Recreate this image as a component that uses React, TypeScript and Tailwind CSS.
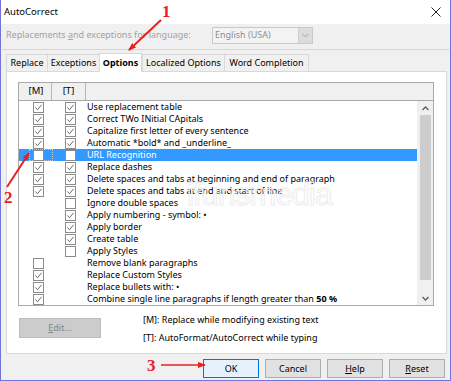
import React from 'react';

type Row = { m: boolean | null; t: boolean | null; label: React.ReactNode; active?: boolean };

const rows: Row[] = [
  { m: true, t: true, label: 'Use replacement table' },
  { m: true, t: true, label: 'Correct TWo INitial CApitals' },
  { m: true, t: true, label: 'Capitalize first letter of every sentence' },
  { m: true, t: true, label: 'Automatic *bold* and _underline_' },
  { m: false, t: false, label: 'URL Recognition', active: true },
  { m: true, t: true, label: 'Replace dashes' },
  { m: true, t: true, label: 'Delete spaces and tabs at beginning and end of paragraph' },
  { m: true, t: true, label: 'Delete spaces and tabs at end and start of line' },
  { m: null, t: false, label: 'Ignore double spaces' },
  { m: null, t: true, label: 'Apply numbering - symbol: •' },
  { m: null, t: true, label: 'Apply border' },
  { m: null, t: true, label: 'Create table' },
  { m: null, t: false, label: 'Apply Styles' },
  { m: false, t: null, label: 'Remove blank paragraphs' },
  { m: true, t: null, label: 'Replace Custom Styles' },
  { m: true, t: null, label: 'Replace bullets with: •' },
  {
    m: true,
    t: null,
    label: (
      <>
        Combine single line paragraphs if length greater than <b className="font-bold">50 %</b>
      </>
    ),
  },
];

function Check({ on }: { on: boolean | null }) {
  if (on === null) return <span className="w-[11px] h-[11px] shrink-0" />;
  return (
    <span className="w-[11px] h-[11px] shrink-0 border border-[#8c8c8c] bg-white flex items-center justify-center">
      {on && (
        <svg width="9" height="9" viewBox="0 0 9 9">
          <polyline points="1.5,4.5 3.5,6.8 7.5,1.8" fill="none" stroke="#6a6a6a" strokeWidth="1" />
        </svg>
      )}
    </span>
  );
}

const tabs = ['Replace', 'Exceptions', 'Options', 'Localized Options', 'Word Completion'];
const tabW = [41, 52, 43, 82, 85];

export default function App() {
  return (
    <div
      className="relative w-[451px] h-[381px] bg-[#f0f0f0] border-x border-b border-[#7373d9] flex flex-col text-[9px] text-black overflow-hidden"
      style={{ fontFamily: '"Noto Sans", "Open Sans", sans-serif' }}
    >
      {/* title bar */}
      <div className="h-[24px] bg-white flex items-center justify-between pl-[3px] pr-[9px] shrink-0">
        <span className="text-[9.5px]">AutoCorrect</span>
        <svg width="10" height="10" viewBox="0 0 10 10">
          <path d="M0.5 0.5 L9.5 9.5 M9.5 0.5 L0.5 9.5" stroke="#222" strokeWidth="1" />
        </svg>
      </div>

      {/* language row */}
      <div className="h-[22px] flex items-center pl-[5px] shrink-0">
        <span className="text-[#a3a3a3] w-[206px]">
          Replacements <span className="underline">a</span>nd exceptions for language:
        </span>
        <div className="w-[101px] h-[17px] border border-[#c9c9c9] bg-[#f3f3f3] flex items-center">
          <span className="flex-1 pl-[2px] text-[#8e8e8e]">English (USA)</span>
          <span className="w-[14px] h-[15px] bg-[#dcdcdc] border-l border-[#cfcfcf] flex items-center justify-center">
            <svg width="7" height="5" viewBox="0 0 7 5">
              <polyline points="0.5,1 3.5,4 6.5,1" fill="none" stroke="#a0a0a0" strokeWidth="1" />
            </svg>
          </span>
        </div>
      </div>

      <div className="h-[4px] border-b border-[#d6d6d6] mx-[1px] shrink-0" />

      {/* tabs */}
      <div className="h-[21px] flex items-end pl-[5px] shrink-0">
        {tabs.map((t, i) => {
          const sel = t === 'Options';
          return (
            <div
              key={t}
              style={{ width: tabW[i] }}
              className={
                sel
                  ? 'h-[19px] bg-white border-x border-t border-[#d9d9d9] flex items-center justify-center font-bold -mb-px relative z-10'
                  : 'h-[17px] bg-[#f0f0f0] border-t border-l last:border-r border-[#d9d9d9] flex items-center justify-center'
              }
            >
              {t}
            </div>
          );
        })}
      </div>

      {/* panel */}
      <div className="mx-[5px] w-[441px] h-[283px] bg-white border border-[#d9d9d9] shrink-0 flex flex-col pl-[11px] pt-[10px]">
        {/* list */}
        <div className="w-[416px] h-[224px] border border-[#aaaaaa] flex flex-col">
          <div className="h-[18px] bg-[#f0f0f0] border-b border-[#a8a8a8] flex shrink-0">
            <div className="w-[33px] border-r border-[#b5b5b5] flex items-center justify-center pl-[2px] text-[9.5px]">[M]</div>
            <div className="w-[34px] border-r border-[#b5b5b5] flex items-center justify-center text-[9.5px]">[T]</div>
            <div className="flex-1" />
          </div>
          <div className="flex flex-1">
            <div className="flex-1 flex flex-col">
              {rows.map((r, i) => (
                <div
                  key={i}
                  className={
                    'h-[12px] flex items-center ' + (r.active ? 'bg-[#3399ff] text-white' : '')
                  }
                >
                  <div
                    className={
                      'w-[24px] h-[12px] ml-[10px] pl-[3px] flex items-center shrink-0 ' +
                      (r.active ? 'border border-dotted border-[#c0c8d4]' : 'border border-transparent')
                    }
                  >
                    <Check on={r.m} />
                  </div>
                  <div className="w-[12px] shrink-0" />
                  <Check on={r.t} />
                  <span className="ml-[11px] whitespace-nowrap leading-[12px]">{r.label}</span>
                </div>
              ))}
            </div>
            {/* scrollbar */}
            <div className="w-[16px] bg-[#f0f0f0] flex flex-col items-center">
              <div className="h-[14px] flex items-center justify-center">
                <svg width="7" height="5" viewBox="0 0 7 5">
                  <polyline points="0.5,4 3.5,1 6.5,4" fill="none" stroke="#606060" strokeWidth="1.4" />
                </svg>
              </div>
              <div className="w-[11px] h-[165px] bg-[#cdcdcd]" />
              <div className="flex-1" />
              <div className="h-[14px] flex items-center justify-center">
                <svg width="7" height="5" viewBox="0 0 7 5">
                  <polyline points="0.5,1 3.5,4 6.5,1" fill="none" stroke="#606060" strokeWidth="1.4" />
                </svg>
              </div>
            </div>
          </div>
        </div>

        {/* below list */}
        <div className="flex mt-[8px]">
          <div className="w-[82px] h-[20px] mt-[4px] ml-[1px] bg-[#cccccc] border border-[#bfbfbf] flex items-center justify-center text-[#848484]">
            <span>
              <span className="underline">E</span>dit...
            </span>
          </div>
          <div className="ml-[42px] flex flex-col gap-[6px] leading-[12px]">
            <span>[M]: Replace while modifying existing text</span>
            <span>[T]: AutoFormat/AutoCorrect while typing</span>
          </div>
        </div>
      </div>

      {/* buttons */}
      <div className="flex justify-end gap-[6px] pr-[5px] mt-[5px]">
        <div className="w-[56px] h-[19px] bg-[#e5f1fb] border border-[#0078d7] flex items-center justify-center">OK</div>
        <div className="w-[56px] h-[19px] bg-[#e1e1e1] border border-[#adadad] flex items-center justify-center">Cancel</div>
        <div className="w-[56px] h-[19px] bg-[#e1e1e1] border border-[#adadad] flex items-center justify-center">
          <span>
            <span className="underline">H</span>elp
          </span>
        </div>
        <div className="w-[56px] h-[19px] bg-[#e1e1e1] border border-[#adadad] flex items-center justify-center">
          <span>
            <span className="underline">R</span>eset
          </span>
        </div>
      </div>

      {/* watermark */}
      <div
        className="absolute left-[186px] top-[170px] text-[32px] tracking-[-1px] text-transparent pointer-events-none select-none"
        style={{ WebkitTextStroke: '1px #ededed', fontFamily: '"Liberation Sans Narrow", "Liberation Sans", sans-serif' }}
      >
        ifunsmedia
      </div>

      {/* annotations */}
      <svg className="absolute inset-0 pointer-events-none" width="451" height="381" viewBox="0 0 451 381">
        <defs>
          <marker id="ah" markerWidth="8" markerHeight="6" refX="7" refY="3" orient="auto" markerUnits="userSpaceOnUse">
            <polygon points="0,0 8,3 0,6" fill="#e8201f" />
          </marker>
        </defs>
        <line x1="160" y1="20" x2="128" y2="50" stroke="#e8201f" strokeWidth="2" markerEnd="url(#ah)" />
        <line x1="6" y1="187" x2="28" y2="153" stroke="#e8201f" strokeWidth="2" markerEnd="url(#ah)" />
        <line x1="160" y1="365" x2="204" y2="365" stroke="#e8201f" strokeWidth="1.6" markerEnd="url(#ah)" />
      </svg>
      <span
        className="absolute left-[161px] top-[3px] text-[17px] font-bold text-[#e8201f] leading-none"
        style={{ fontFamily: '"Liberation Serif", serif' }}
      >
        1
      </span>
      <span
        className="absolute left-[3px] top-[189px] text-[17px] font-bold text-[#e8201f] leading-none"
        style={{ fontFamily: '"Liberation Serif", serif' }}
      >
        2
      </span>
      <span
        className="absolute left-[146px] top-[357px] text-[17px] font-bold text-[#e8201f] leading-none"
        style={{ fontFamily: '"Liberation Serif", serif' }}
      >
        3
      </span>
    </div>
  );
}
